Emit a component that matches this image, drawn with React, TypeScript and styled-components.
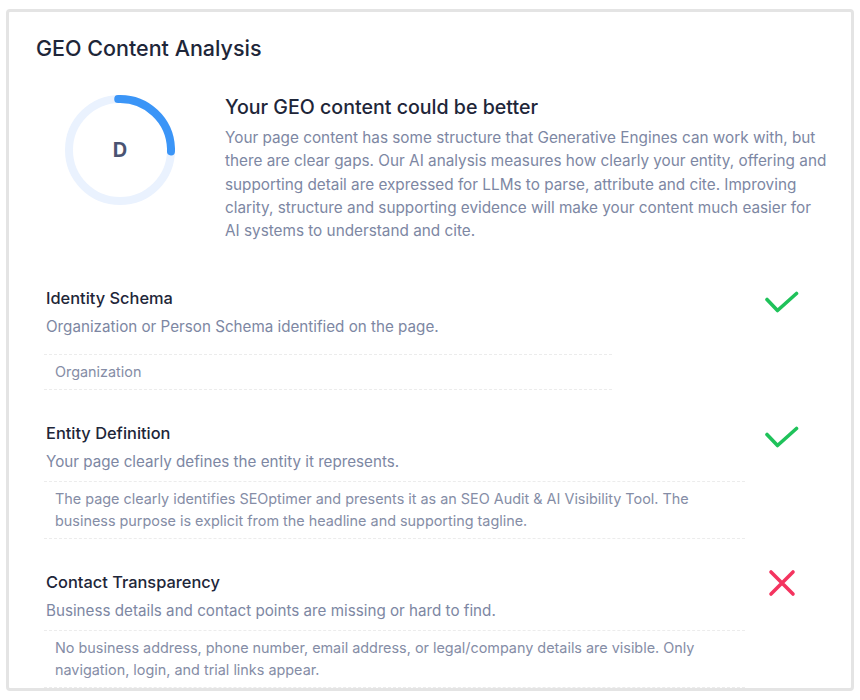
import React from "react";
import styled, { createGlobalStyle } from "styled-components";

const GlobalStyle = createGlobalStyle`
  body {
    margin: 0;
    background: #ffffff;
    font-family: Inter, "Noto Sans", "Liberation Sans", sans-serif;
    -webkit-font-smoothing: antialiased;
  }
`;

const Page = styled.div`
  padding: 9px 6px 0 6px;
`;

const Card = styled.section`
  width: 848px;
  box-sizing: border-box;
  border: 3px solid #e4e4e4;
  border-radius: 4px;
  background: #fff;
  padding: 22px 0 0 0;
  min-height: 681px;
`;

const Title = styled.h2`
  margin: 0 0 32px 27px;
  font-size: 21.5px;
  line-height: 28px;
  font-weight: 500;
  color: #1e2639;
`;

const Summary = styled.div`
  display: flex;
  align-items: flex-start;
  padding-left: 52px;
  gap: 46px;
  margin-bottom: 44px;
`;

const RingWrap = styled.div`
  position: relative;
  width: 118px;
  height: 112px;
  flex-shrink: 0;
`;

const Grade = styled.span`
  position: absolute;
  inset: 0;
  display: flex;
  align-items: center;
  justify-content: center;
  font-size: 20px;
  font-weight: 700;
  color: #4a5372;
`;

const SummaryText = styled.div`
  width: 604px;
`;

const Heading = styled.h3`
  margin: 0;
  font-size: 19.6px;
  line-height: 26px;
  font-weight: 500;
  color: #1e2639;
`;

const Lead = styled.p`
  margin: 6px 0 0 0;
  font-size: 15.3px;
  line-height: 23.3px;
  color: #7d87a3;
`;

const Checks = styled.div`
  display: flex;
  flex-direction: column;
  gap: 31px;
  padding: 0 0 0 37px;
`;

const Row = styled.div`
  display: flex;
  align-items: flex-start;
`;

const Body = styled.div`
  flex: 1;
  min-width: 0;
`;

const CheckTitle = styled.div`
  padding-top: 1px;
  font-size: 16.4px;
  line-height: 22px;
  font-weight: 500;
  color: #1e2639;
`;

const CheckDesc = styled.div<{ $gap: number }>`
  margin-top: 7px;
  margin-bottom: ${(p) => p.$gap}px;
  font-size: 15.2px;
  line-height: 22px;
  color: #7d87a3;
`;

const Detail = styled.div<{ $width: number }>`
  width: ${(p) => p.$width}px;
  margin-left: -2px;
  box-sizing: border-box;
  padding: 6px 11px 6px 11px;
  border-top: 1px dashed #ececec;
  border-bottom: 1px dashed #ececec;
  font-size: 14.4px;
  line-height: 22px;
  color: #858da6;
`;

const IconCell = styled.div<{ $top: number }>`
  width: 40px;
  margin: ${(p) => p.$top}px 49px 0 0;
  display: flex;
  justify-content: center;
`;

const ScoreRing: React.FC<{ grade: string; pct: number }> = ({ grade, pct }) => {
  const r = 51;
  const c = 2 * Math.PI * r;
  return (
    <RingWrap>
      <svg width="118" height="112" viewBox="0 0 118 112">
        <circle cx="59" cy="56" r={r} fill="none" stroke="#eaf2fe" strokeWidth="8" />
        <circle
          cx="59"
          cy="56"
          r={r}
          fill="none"
          stroke="#3b95f7"
          strokeWidth="8"
          strokeLinecap="round"
          strokeDasharray={`${c * pct} ${c}`}
          transform="rotate(-92 59 56)"
        />
      </svg>
      <Grade>{grade}</Grade>
    </RingWrap>
  );
};

const PassIcon = () => (
  <svg width="36" height="26" viewBox="0 0 36 26">
    <path
      d="M3 8.5 L13.5 19.5 L32.5 2.5"
      fill="none"
      stroke="#1fc25a"
      strokeWidth="3.6"
      strokeLinecap="round"
      strokeLinejoin="round"
    />
  </svg>
);

const FailIcon = () => (
  <svg width="28" height="28" viewBox="0 0 28 28">
    <path
      d="M3 3 L25 25 M25 3 L3 25"
      fill="none"
      stroke="#f4345f"
      strokeWidth="3.6"
      strokeLinecap="round"
    />
  </svg>
);

interface Check {
  title: string;
  desc: string;
  detail: string;
  pass: boolean;
  width: number;
  gap: number;
}

const checks: Check[] = [
  {
    title: "Identity Schema",
    desc: "Organization or Person Schema identified on the page.",
    detail: "Organization",
    pass: true,
    width: 568,
    gap: 16,
  },
  {
    title: "Entity Definition",
    desc: "Your page clearly defines the entity it represents.",
    detail:
      "The page clearly identifies SEOptimer and presents it as an SEO Audit & AI Visibility Tool. The business purpose is explicit from the headline and supporting tagline.",
    pass: true,
    width: 701,
    gap: 8,
  },
  {
    title: "Contact Transparency",
    desc: "Business details and contact points are missing or hard to find.",
    detail:
      "No business address, phone number, email address, or legal/company details are visible. Only navigation, login, and trial links appear.",
    pass: false,
    width: 701,
    gap: 8,
  },
];

export default function App() {
  return (
    <Page>
      <GlobalStyle />
      <Card>
        <Title>GEO Content Analysis</Title>
        <Summary>
          <ScoreRing grade="D" pct={0.26} />
          <SummaryText>
            <Heading>Your GEO content could be better</Heading>
            <Lead>
              Your page content has some structure that Generative Engines can work with, but
              there are clear gaps. Our AI analysis measures how clearly your entity, offering and
              supporting detail are expressed for LLMs to parse, attribute and cite. Improving
              clarity, structure and supporting evidence will make your content much easier for
              AI systems to understand and cite.
            </Lead>
          </SummaryText>
        </Summary>
        <Checks>
          {checks.map((c) => (
            <Row key={c.title}>
              <Body>
                <CheckTitle>{c.title}</CheckTitle>
                <CheckDesc $gap={c.gap}>{c.desc}</CheckDesc>
                <Detail $width={c.width}>{c.detail}</Detail>
              </Body>
              <IconCell $top={c.pass ? 5 : -1}>{c.pass ? <PassIcon /> : <FailIcon />}</IconCell>
            </Row>
          ))}
        </Checks>
      </Card>
    </Page>
  );
}
